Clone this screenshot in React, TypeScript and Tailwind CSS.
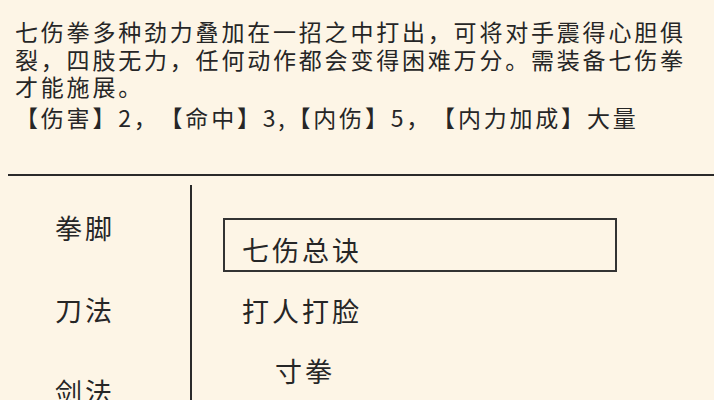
import React from "react";

const categories = ["拳脚", "刀法", "剑法"];
const skills = [
  { name: "七伤总诀", selected: true, indent: false },
  { name: "打人打脸", selected: false, indent: false },
  { name: "寸拳", selected: false, indent: true },
];

const App: React.FC = () => {
  return (
    <div
      className="w-[714px] h-[400px] overflow-hidden bg-[#fdf5e6] text-[#262626] flex flex-col [text-spacing-trim:space-all]"
      style={{ fontFamily: '"Noto Sans CJK SC", "Noto Sans", sans-serif' }}
    >
      {/* skill description */}
      <div className="h-[174px] shrink-0 pl-[15px] pr-[12px] pt-[18px] text-[23px] leading-[27.5px] tracking-[2.8px]">
        <p>
          七伤拳多种劲力叠加在一招之中打出，可将对手震得心胆俱裂，四肢无力，任何动作都会变得困难万分。需装备七伤拳才能施展。
        </p>
        <p className="mt-[3px]">【伤害】2，【命中】3,【内伤】5，【内力加成】大量</p>
      </div>

      <div className="shrink-0 ml-[8px] h-[2px] bg-[#2a2a2a]" />

      <div className="flex flex-1 min-h-0">
        {/* category list */}
        <div className="w-[190px] shrink-0 flex flex-col pl-[55px] pt-[36px] gap-[50px] text-[27px] leading-[32px] tracking-[3px]">
          {categories.map((c) => (
            <div key={c}>{c}</div>
          ))}
        </div>

        <div className="mt-[9px] w-[2px] shrink-0 bg-[#2a2a2a]" />

        {/* skill list */}
        <div className="flex flex-col pt-[42px] pl-[31px] text-[27px] leading-[32px] tracking-[3px]">
          {skills.map((s) =>
            s.selected ? (
              <div
                key={s.name}
                className="w-[394px] h-[54px] border-2 border-[#333] flex items-center pl-[17px] pt-[10px]"
              >
                {s.name}
              </div>
            ) : (
              <div
                key={s.name}
                className={s.indent ? "mt-[28px] pl-[52px]" : "mt-[23px] pl-[19px]"}
              >
                {s.name}
              </div>
            )
          )}
        </div>
      </div>
    </div>
  );
};

export default App;
